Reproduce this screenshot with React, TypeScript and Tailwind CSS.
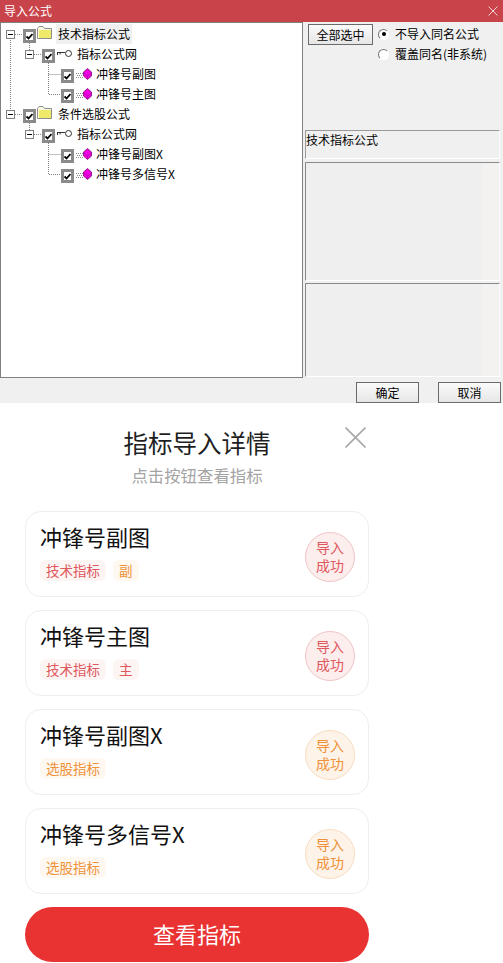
const cjk = "font-['Noto_Sans_CJK_SC','Liberation_Sans',sans-serif]";

type TreeRow = { level: 0 | 1 | 2; label: string; selected?: boolean };

const treeRows: TreeRow[] = [
  { level: 0, label: '技术指标公式', selected: true },
  { level: 1, label: '指标公式网' },
  { level: 2, label: '冲锋号副图' },
  { level: 2, label: '冲锋号主图' },
  { level: 0, label: '条件选股公式' },
  { level: 1, label: '指标公式网' },
  { level: 2, label: '冲锋号副图X' },
  { level: 2, label: '冲锋号多信号X' },
];

type Tone = 'red' | 'orange';
type Tag = { text: string; tone: Tone };
type Item = { name: string; tags: Tag[]; tone: Tone };

const items: Item[] = [
  { name: '冲锋号副图', tone: 'red', tags: [{ text: '技术指标', tone: 'red' }, { text: '副', tone: 'orange' }] },
  { name: '冲锋号主图', tone: 'red', tags: [{ text: '技术指标', tone: 'red' }, { text: '主', tone: 'red' }] },
  { name: '冲锋号副图X', tone: 'orange', tags: [{ text: '选股指标', tone: 'orange' }] },
  { name: '冲锋号多信号X', tone: 'orange', tags: [{ text: '选股指标', tone: 'orange' }] },
];

function Expander() {
  return (
    <span className="flex h-[9px] w-[9px] items-center justify-center border border-[#808080] bg-white">
      <span className="h-px w-[5px] bg-black" />
    </span>
  );
}

function Check() {
  return (
    <span className="mt-[4px] flex h-[14px] w-[13px] items-center justify-center border-[3px] border-[#8a8a8a] bg-white">
      <svg width="7" height="7" viewBox="0 0 7 7">
        <path d="M0.5 3.5 L2.5 5.5 L6.5 1" fill="none" stroke="#000" strokeWidth="1.8" />
      </svg>
    </span>
  );
}

function Folder() {
  return (
    <svg width="15" height="13" viewBox="0 0 15 13">
      <path d="M0.5 12.5 V2.5 L2 0.5 H6 L7.5 2.5 H14.5 V12.5 Z" fill="#fbfbe0" stroke="#8d8d8d" />
      <path d="M2 4 H14 V12 H2 Z" fill="#efe96a" />
    </svg>
  );
}

function KeyIcon() {
  return (
    <svg width="15" height="9" viewBox="0 0 15 9">
      <circle cx="11.5" cy="4.5" r="3" fill="#fff" stroke="#333" />
      <path d="M0 3.5 H8 M0.5 3.5 V6 M3 3.5 V5.5" stroke="#333" fill="none" />
    </svg>
  );
}

function FormulaIcon() {
  return (
    <svg width="16" height="12" viewBox="0 0 16 12">
      <path d="M0 5.5 H7 M1 7.5 H7 M0 9.5 H7" stroke="#8a8a8a" strokeDasharray="1 1" fill="none" />
      <path d="M11.5 0.5 L15.5 4 V8 L11.5 11.5 L7.5 8 V4 Z" fill="#f000e0" stroke="#7a0a7a" strokeWidth="0.8" />
      <path d="M7.5 5 L11.5 8 L15.5 5 M11.5 8 V11" fill="none" stroke="#a000a0" strokeWidth="0.6" />
    </svg>
  );
}

function TreeLines() {
  return (
    <svg className="absolute left-0 top-0" width="110" height="170" viewBox="0 0 110 170">
      <g stroke="#808080" strokeDasharray="1 1" fill="none">
        <path d="M9.5 15 V87" />
        <path d="M14 11.5 H22" />
        <path d="M14 91.5 H22" />
        <path d="M28.5 20 V27" />
        <path d="M28.5 100 V107" />
        <path d="M33 31.5 H41" />
        <path d="M33 111.5 H41" />
        <path d="M47.5 40 V71.5 H60" />
        <path d="M47.5 51.5 H60" />
        <path d="M47.5 120 V151.5 H60" />
        <path d="M47.5 131.5 H60" />
      </g>
    </svg>
  );
}

function ImportTree() {
  return (
    <div className="relative h-[356px] w-[303px] border border-[#808080] bg-white pt-[1px]">
      <TreeLines />
      {treeRows.map((row, i) => (
        <div key={i} className="relative flex h-[20px] items-center">
          {row.level === 0 && (
            <div className="ml-[5px] flex items-center">
              <Expander />
              <span className="ml-2 flex"><Check /></span>
              <span className="ml-px -mt-[4px] flex"><Folder /></span>
              <span className={`ml-[4px] px-[2px] leading-[20px] ${row.selected ? 'bg-[#f0f0f0]' : ''}`}>{row.label}</span>
            </div>
          )}
          {row.level === 1 && (
            <div className="ml-[24px] flex items-center">
              <Expander />
              <span className="ml-2 flex"><Check /></span>
              <span className="ml-[2px] -mt-[2px] flex"><KeyIcon /></span>
              <span className="ml-[5px]">{row.label}</span>
            </div>
          )}
          {row.level === 2 && (
            <div className="ml-[60px] flex items-center">
              <Check />
              <span className="ml-[2px] flex"><FormulaIcon /></span>
              <span className="ml-[4px]">{row.label}</span>
            </div>
          )}
        </div>
      ))}
    </div>
  );
}

function Radio({ checked, label }: { checked?: boolean; label: string }) {
  return (
    <div className="flex h-[20px] items-center gap-[6px]">
      <span className="flex h-[11px] w-[11px] items-center justify-center rounded-full border border-[#777] border-b-white border-r-white bg-white">
        {checked && <span className="h-[4px] w-[4px] rounded-full bg-black" />}
      </span>
      <span>{label}</span>
    </div>
  );
}

function WinButton({ label, className }: { label: string; className: string }) {
  return (
    <button className={`flex items-center justify-center border border-[#6b6b6b] bg-gradient-to-b from-[#fbfbfb] to-[#e6e6e6] text-black ${className}`}>
      {label}
    </button>
  );
}

function InsetBox({ className }: { className: string }) {
  return (
    <div className={`flex w-[195px] justify-end border border-[#8a8a8a] border-b-white border-r-white bg-[#efefef] ${className}`}>
      <div className="w-[17px] bg-[#f3f2f0]" />
    </div>
  );
}

function SidePane() {
  return (
    <div className="flex h-[356px] flex-1 flex-col pl-[2px]">
      <div className="flex h-[108px] items-start pl-[3px] pt-[2px]">
        <WinButton label="全部选中" className="h-[21px] w-[65px]" />
        <div className="ml-[5px] flex flex-col">
          <Radio checked label="不导入同名公式" />
          <Radio label="覆盖同名(非系统)" />
        </div>
      </div>
      <div className="h-[29px] w-[195px] border border-[#9a9a9a] border-b-white border-r-white text-black leading-[18px]">
        技术指标公式
      </div>
      <InsetBox className="mt-[3px] h-[119px]" />
      <InsetBox className="mt-[2px] h-[94px]" />
    </div>
  );
}

function ImportWindow() {
  return (
    <div className="flex h-[403px] flex-col bg-[#f0f0f0] text-[12px] text-black">
      <div className="flex h-[22px] items-center justify-between bg-[#c9434a] pl-[4px] pr-[5px] text-white">
        <span>导入公式</span>
        <svg width="10" height="10" viewBox="0 0 10 10">
          <path d="M0.5 0.5 L9.5 9.5 M9.5 0.5 L0.5 9.5" stroke="#f3d5d6" fill="none" />
        </svg>
      </div>
      <div className="flex">
        <ImportTree />
        <SidePane />
      </div>
      <div className="flex flex-1 items-end justify-end gap-[19px] pr-[2px]">
        <WinButton label="确定" className="h-[21px] w-[63px]" />
        <WinButton label="取消" className="h-[21px] w-[63px]" />
      </div>
    </div>
  );
}

function Badge({ tone }: { tone: Tone }) {
  const toneClass =
    tone === 'red'
      ? 'border-[#f0c4c6] bg-[#fdeeee] text-[#e0575c]'
      : 'border-[#f8dcc0] bg-[#fef3e8] text-[#ee9138]';
  return (
    <div className={`flex h-[50px] w-[50px] items-center justify-center rounded-full border pb-[2px] text-[14px] leading-[18px] ${toneClass}`}>
      <span className="w-[28px] text-center">导入成功</span>
    </div>
  );
}

function TagPill({ tag }: { tag: Tag }) {
  const toneClass = tag.tone === 'red' ? 'bg-[#fdf4f4] text-[#e0575c]' : 'bg-[#fef8f1] text-[#ee9138]';
  return <span className={`rounded-[6px] px-[6px] text-[13.5px] leading-[21px] ${toneClass}`}>{tag.text}</span>;
}

function ResultCard({ item }: { item: Item }) {
  return (
    <div className="flex h-[86px] items-start justify-between rounded-[16px] border border-[#eeeeee] bg-white pl-[14px] pr-[13px]">
      <div>
        <div className="mt-[8px] text-[22px] leading-[32px] text-[#111111]">{item.name}</div>
        <div className="mt-[8px] flex gap-[7px]">
          {item.tags.map((tag) => (
            <TagPill key={tag.text} tag={tag} />
          ))}
        </div>
      </div>
      <div className="mt-[20px]">
        <Badge tone={item.tone} />
      </div>
    </div>
  );
}

function DetailSheet() {
  return (
    <div className="w-[394px] bg-white pl-[25px] pr-[25px]">
      <div className="relative h-[108px] pt-[23px] text-center">
        <h2 className="text-[24.5px] leading-[34px] text-[#1f1f1f]">指标导入详情</h2>
        <p className="mt-[3px] text-[16.4px] leading-[24px] text-[#a3a3a3]">点击按钮查看指标</p>
        <svg className="absolute left-[320px] top-[24px]" width="21" height="21" viewBox="0 0 21 21">
          <path d="M0.5 0.5 L20.5 20.5 M20.5 0.5 L0.5 20.5" stroke="#a8a8a8" strokeWidth="1.6" fill="none" />
        </svg>
      </div>
      <div className="flex flex-col gap-[13px]">
        {items.map((item) => (
          <ResultCard key={item.name} item={item} />
        ))}
      </div>
      <button className="mt-[13px] h-[55px] w-full rounded-full bg-[#e93232] pb-[3px] text-[22px] text-white">查看指标</button>
    </div>
  );
}

export default function App() {
  return (
    <div className={`h-[963px] w-[503px] overflow-hidden bg-white ${cjk}`}>
      <ImportWindow />
      <DetailSheet />
    </div>
  );
}
